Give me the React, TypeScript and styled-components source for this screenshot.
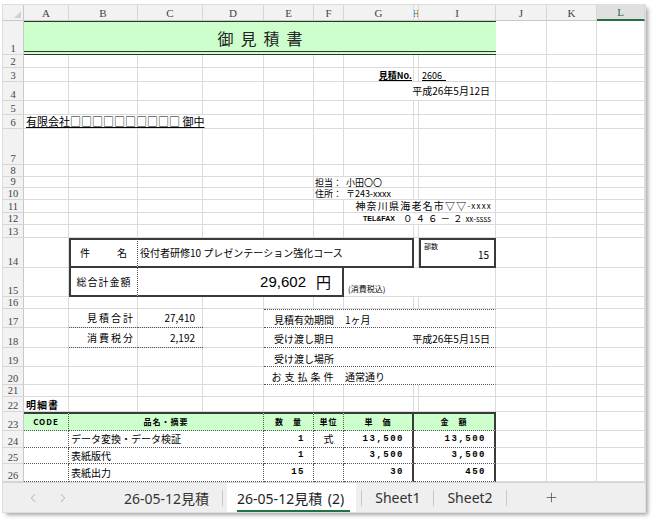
import styled, { createGlobalStyle } from 'styled-components';
import { ChevronLeft, ChevronRight, Plus } from 'lucide-react';

const LETTERS = 'ABCDEFGHIJKL'.split('');
const COL_WIDTHS = [45, 69, 65, 61, 50, 30, 70, 5, 77, 51, 50, 48];
const ROW_HEIGHTS = [34, 13, 14, 19, 14, 14, 36, 12, 11, 12, 13, 12, 13, 30, 29, 12, 19, 20, 19, 18, 12, 15, 19, 17, 16, 18];

const GRID = '#dadada';
const FRAME = '2px solid #3a3a3a';
const DOT = '1px dotted #555';
const JP = '"Noto Sans CJK JP", "Noto Sans", sans-serif';

const col = (l: string) => LETTERS.indexOf(l) + 2;
const area = (r1: number, c1: string, r2 = r1, c2 = c1) =>
  `${r1 + 1} / ${col(c1)} / ${r2 + 2} / ${col(c2) + 1}`;

const GlobalStyle = createGlobalStyle`
  * { box-sizing: border-box; }
  html, body { margin: 0; padding: 0; background: #fff; }
  body { font-family: ${JP}; color: #000; }
`;

const Page = styled.div`
  width: 654px;
  height: 520px;
  padding: 5px 0 0 3px;
`;

const Window = styled.div`
  width: 642px;
  height: 507px;
  display: flex;
  flex-direction: column;
  background: #fff;
  overflow: hidden;
  box-shadow: 0 0 0 1px #dedede, 3px 3px 4px rgba(0, 0, 0, 0.35);
`;

const Sheet = styled.div`
  flex: none;
  height: 477px;
  overflow: hidden;
  display: grid;
  grid-template-columns: 21px ${COL_WIDTHS.map((w) => `${w}px`).join(' ')};
  grid-template-rows: 16px ${ROW_HEIGHTS.map((h) => `${h}px`).join(' ')};
  font-size: 10px;
`;

const Corner = styled.div`
  grid-row: 1;
  grid-column: 1;
  position: relative;
  background: #f2f2f2;
  border-right: 1px solid #c8c8c8;
  border-bottom: 1px solid #c8c8c8;

  &::after {
    content: '';
    position: absolute;
    right: 2px;
    bottom: 2px;
    border-style: solid;
    border-width: 0 0 7px 7px;
    border-color: transparent transparent #d2d2d2 transparent;
  }
`;

const ColHead = styled.div<{ $c: number; $active?: boolean }>`
  grid-row: 1;
  grid-column: ${(p) => p.$c};
  display: flex;
  align-items: center;
  justify-content: center;
  overflow: hidden;
  background: ${(p) => (p.$active ? '#e0e0e0' : '#f2f2f2')};
  border-right: 1px solid #d6d6d6;
  border-bottom: ${(p) => (p.$active ? '2px solid #217346' : '1px solid #c8c8c8')};
  color: ${(p) => (p.$active ? '#1d6b40' : '#444')};
  font: 11px "Liberation Serif", serif;
`;

const RowHead = styled.div<{ $r: number }>`
  grid-row: ${(p) => p.$r};
  grid-column: 1;
  display: flex;
  align-items: flex-end;
  justify-content: center;
  overflow: hidden;
  background: #f2f2f2;
  border-right: 1px solid #c8c8c8;
  border-bottom: 1px solid #d6d6d6;
  color: #444;
  font: 10.5px/10px "Liberation Serif", serif;
`;

const GridBox = styled.div<{ $r: number; $c: number }>`
  grid-row: ${(p) => p.$r};
  grid-column: ${(p) => p.$c};
  border-right: 1px solid ${GRID};
  border-bottom: 1px solid ${GRID};
`;

type CellProps = {
  $area: string;
  $justify?: string;
  $align?: string;
  $size?: number;
  $pad?: string;
  $fill?: boolean;
  $spacing?: number;
  $bold?: boolean;
};

const Cell = styled.div<CellProps>`
  grid-area: ${(p) => p.$area};
  display: flex;
  justify-content: ${(p) => p.$justify ?? 'flex-start'};
  align-items: ${(p) => p.$align ?? 'center'};
  padding: ${(p) => p.$pad ?? '0 2px'};
  font-size: ${(p) => p.$size ?? 10}px;
  font-weight: ${(p) => (p.$bold ? 700 : 400)};
  letter-spacing: ${(p) => p.$spacing ?? 0}px;
  line-height: 1;
  white-space: nowrap;
  min-width: 0;
  ${(p) => p.$fill && `background: #fff; border-right: 1px solid ${GRID}; border-bottom: 1px solid ${GRID};`}
`;

const Under = styled.span`
  text-decoration: underline;
  text-underline-offset: 1px;
`;

const TitleCell = styled.div`
  grid-area: ${area(1, 'A', 1, 'I')};
  display: flex;
  align-items: center;
  justify-content: center;
  padding: 2px 0 0 7px;
  background: #ccffcc;
  border-top: 1px solid #333;
  border-bottom: 4px double #333;
  font-size: 16px;
  letter-spacing: 7px;
  color: #222;
`;

const Framed = styled(Cell)<{ $edges: string; $dotRight?: boolean }>`
  background: #fff;
  border-top: ${(p) => (p.$edges.includes('t') ? FRAME : 'none')};
  border-left: ${(p) => (p.$edges.includes('l') ? FRAME : 'none')};
  border-bottom: ${(p) => (p.$edges.includes('b') ? FRAME : 'none')};
  border-right: ${(p) => (p.$edges.includes('r') ? FRAME : p.$dotRight ? DOT : 'none')};
`;

const Amount = styled.span`
  font: 15px "Liberation Sans", sans-serif;
`;

const Yen = styled.span`
  font-size: 15px;
`;

const CopiesLabel = styled.span`
  align-self: flex-start;
  font-size: 7px;
`;

const PersonLabel = styled.span`
  width: 31px;
`;

const TelTag = styled.span`
  font: bold 7px "Liberation Sans", sans-serif;
  margin-right: 8px;
`;

const TelNum = styled.span`
  font-size: 9.5px;
  letter-spacing: 3px;
`;

const TelTail = styled.span`
  font-size: 8px;
`;

const SumCell = styled(Cell)`
  border-bottom: ${DOT};
`;

const InfoRow = styled.div<{ $r: number; $first?: boolean }>`
  grid-area: ${(p) => area(p.$r, 'E', p.$r, 'I')};
  display: flex;
  align-items: center;
  background: #fff;
  border-top: ${(p) => (p.$first ? DOT : 'none')};
  border-bottom: ${DOT};
  border-right: 1px solid ${GRID};
  padding-top: 2px;
  font-size: 10px;
  white-space: nowrap;
`;

const InfoLabel = styled.span<{ $spaced?: boolean }>`
  width: 80px;
  text-align: center;
  letter-spacing: ${(p) => (p.$spaced ? 3 : 0)}px;
`;

const InfoValue = styled.span<{ $right?: boolean }>`
  flex: 1;
  padding: 0 5px 0 1px;
  text-align: ${(p) => (p.$right ? 'right' : 'left')};
`;

const TableCell = styled(Cell)<{ $head?: boolean; $solid?: boolean; $mono?: boolean }>`
  background: ${(p) => (p.$head ? '#ccffcc' : '#fff')};
  border-top: ${(p) => (p.$head ? FRAME : 'none')};
  border-bottom: ${DOT};
  border-right: ${(p) => (p.$solid ? FRAME : DOT)};
  font-family: ${(p) => (p.$mono ? '"Liberation Mono", monospace' : JP)};
  font-weight: ${(p) => (p.$head || p.$mono ? 700 : 400)};
`;

const TabBar = styled.div`
  flex: 1;
  display: flex;
  align-items: stretch;
  background: #efefef;
  border-top: 1px solid #d4d4d4;
  font: 14px "Noto Sans", "Noto Sans CJK JP", sans-serif;
  color: #333;
`;

const Nav = styled.div`
  width: 108px;
  display: flex;
  align-items: center;
  gap: 16px;
  padding-left: 23px;
  color: #a6a6a6;
`;

const Tab = styled.div`
  display: flex;
  align-items: center;
  padding: 0 13px;
`;

const ActiveTab = styled(Tab)`
  margin: 0 5px 0 4px;
  padding: 0 6px 0 10px;
  background: #fff;
  color: #1f1f1f;
`;

const ActiveLabel = styled.span`
  padding: 0 6px 2px 0;
  border-bottom: 2px solid #217346;
  margin-top: 4px;
  word-spacing: 2px;
`;

const Sep = styled.div`
  width: 1px;
  height: 16px;
  align-self: center;
  background: #c8c8c8;
`;

const AddSheet = styled.div`
  display: flex;
  align-items: center;
  margin-left: 37px;
  color: #555;
`;

const TABLE_COLS = [
  { from: 'A', to: 'A', justify: 'center' },
  { from: 'B', to: 'D', justify: 'flex-start' },
  { from: 'E', to: 'E', justify: 'flex-end', mono: true },
  { from: 'F', to: 'F', justify: 'center' },
  { from: 'G', to: 'G', justify: 'flex-end', mono: true, solid: true },
  { from: 'H', to: 'I', justify: 'flex-end', mono: true, solid: true },
];

const HEADERS = ['CODE', '品名・摘要', '数　量', '単位', '単　価', '金　額'];

const ITEMS = [
  ['', 'データ変換・データ検証', '1', '式', '13,500', '13,500'],
  ['', '表紙版代', '1', '', '3,500', '3,500'],
  ['', '表紙出力', '15', '', '30', '450'],
];

const INFO = [
  { label: '見積有効期間', value: '1ヶ月' },
  { label: '受け渡し期日', value: '平成26年5月15日', right: true },
  { label: '受け渡し場所', value: '' },
  { label: 'お支払条件', value: '通常通り', spaced: true },
];

export default function App() {
  return (
    <Page>
      <GlobalStyle />
      <Window>
        <Sheet>
          <Corner />
          {LETTERS.map((l, i) => (
            <ColHead key={l} $c={i + 2} $active={l === 'L'}>
              {l}
            </ColHead>
          ))}
          {ROW_HEIGHTS.map((_, r) => (
            <RowHead key={r} $r={r + 2}>
              {r + 1}
            </RowHead>
          ))}
          {ROW_HEIGHTS.map((_, r) =>
            LETTERS.map((l, c) => <GridBox key={`${r}-${l}`} $r={r + 2} $c={c + 2} />)
          )}

          <TitleCell>御見積書</TitleCell>

          <Cell $area={area(3, 'G')} $justify="flex-end" $size={9} $bold>
            <Under>見積No.</Under>
          </Cell>
          <Cell $area={area(3, 'I')} $size={9} $pad="0 2px 0 3px">
            <Under>2606&nbsp;&nbsp;</Under>
          </Cell>
          <Cell $area={area(4, 'G', 4, 'I')} $justify="flex-end" $pad="0 5px 0 0" $fill>
            平成26年5月12日
          </Cell>

          <Cell $area={area(6, 'A', 6, 'D')} $size={11} $fill>
            <Under>有限会社□□□□□□□□□□&nbsp;御中</Under>
          </Cell>

          <Cell $area={area(9, 'F', 9, 'G')} $size={9} $pad="0 0 0 1px" $fill>
            <PersonLabel>担当：</PersonLabel>小田〇〇
          </Cell>
          <Cell $area={area(10, 'F', 10, 'G')} $size={9} $pad="0 0 0 1px" $fill>
            <PersonLabel>住所：</PersonLabel>〒243-xxxx
          </Cell>
          <Cell $area={area(11, 'G', 11, 'I')} $justify="flex-end" $pad="0 3px 0 0" $spacing={1.2} $fill>
            神奈川県海老名市▽▽<TelTail>-xxxx</TelTail>
          </Cell>
          <Cell $area={area(12, 'G', 12, 'I')} $justify="flex-end" $pad="0 4px 0 0" $fill>
            <TelTag>TEL&amp;FAX</TelTag>
            <TelNum>０４６－２</TelNum>
            <TelTail>xx-ssss</TelTail>
          </Cell>

          <Framed $area={area(14, 'B')} $edges="tlb" $dotRight $justify="space-between" $pad="0 10px 0 9px">
            <span>件</span>
            <span>名</span>
          </Framed>
          <Framed $area={area(14, 'C', 14, 'G')} $edges="trb" $pad="0 2px 0 2px">
            役付者研修10 プレゼンテーション強化コース
          </Framed>
          <Framed $area={area(14, 'I')} $edges="tlrb" $justify="space-between" $pad="3px 5px 0 3px">
            <CopiesLabel>部数</CopiesLabel>
            15
          </Framed>

          <Framed $area={area(15, 'B')} $edges="lb" $dotRight $justify="center" $spacing={1}>
            総合計金額
          </Framed>
          <Framed $area={area(15, 'C', 15, 'E')} $edges="b" $justify="flex-end" $pad="0 8px 0 0">
            <Amount>29,602</Amount>
          </Framed>
          <Framed $area={area(15, 'F')} $edges="rb" $pad="0 0 0 2px">
            <Yen>円</Yen>
          </Framed>
          <Cell $area={area(15, 'G', 15, 'I')} $size={8} $align="flex-end" $pad="0 0 3px 4px" $fill>
            (消費税込)
          </Cell>

          <SumCell $area={area(17, 'B')} $justify="flex-end" $spacing={2} $pad="0 3px 0 0">
            見積合計
          </SumCell>
          <SumCell $area={area(17, 'C')} $justify="flex-end" $pad="0 8px 0 0">
            27,410
          </SumCell>
          <SumCell $area={area(18, 'B')} $justify="flex-end" $spacing={2} $pad="0 3px 0 0">
            消費税分
          </SumCell>
          <SumCell $area={area(18, 'C')} $justify="flex-end" $pad="0 8px 0 0">
            2,192
          </SumCell>

          {INFO.map((row, i) => (
            <InfoRow key={row.label} $r={17 + i} $first={i === 0}>
              <InfoLabel $spaced={row.spaced}>{row.label}</InfoLabel>
              <InfoValue $right={row.right}>{row.value}</InfoValue>
            </InfoRow>
          ))}

          <Cell $area={area(22, 'A')} $bold $pad="0 2px" $spacing={1}>
            明細書
          </Cell>

          {TABLE_COLS.map((c, i) => (
            <TableCell
              key={`h-${c.from}`}
              $area={area(23, c.from, 23, c.to)}
              $head
              $solid={c.solid}
              $justify="center"
              $size={8}
              $spacing={1}
            >
              {HEADERS[i]}
            </TableCell>
          ))}
          {ITEMS.map((item, r) =>
            TABLE_COLS.map((c, i) => (
              <TableCell
                key={`${r}-${c.from}`}
                $area={area(24 + r, c.from, 24 + r, c.to)}
                $solid={c.solid}
                $mono={c.mono}
                $justify={c.justify}
                $size={c.mono ? 9 : 10}
                $spacing={c.mono ? 1.5 : 0}
                $pad={c.mono ? '0 8px 0 0' : '0 2px'}
              >
                {item[i]}
              </TableCell>
            ))
          )}
        </Sheet>

        <TabBar>
          <Nav>
            <ChevronLeft size={14} strokeWidth={1.5} />
            <ChevronRight size={14} strokeWidth={1.5} />
          </Nav>
          <Tab>26-05-12見積</Tab>
          <Sep />
          <ActiveTab>
            <ActiveLabel>26-05-12見積 (2)</ActiveLabel>
          </ActiveTab>
          <Sep />
          <Tab>Sheet1</Tab>
          <Sep />
          <Tab>Sheet2</Tab>
          <Sep />
          <AddSheet>
            <Plus size={15} strokeWidth={1.3} />
          </AddSheet>
        </TabBar>
      </Window>
    </Page>
  );
}
